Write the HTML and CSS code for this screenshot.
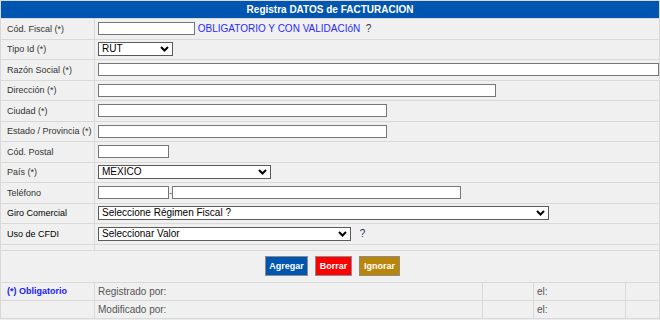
FILE: index.html
```html
<!DOCTYPE html>
<html lang="es">
<head>
    <meta charset="UTF-8">
    <title>Registra DATOS de FACTURACION</title>
    <link rel="stylesheet" href="styles.css">
</head>
<body>
    <table class="form">
        <colgroup>
            <col class="c-lbl">
            <col class="c-main">
            <col class="c-a">
            <col class="c-b">
            <col class="c-c">
        </colgroup>
        <tr>
            <td class="title" colspan="5">Registra DATOS de FACTURACION</td>
        </tr>
        <tr>
            <td class="lbl">Cód. Fiscal (*)</td>
            <td class="fld" colspan="4"><input type="text" class="txt w-fiscal"> <span class="req">OBLIGATORIO Y CON VALIDACIóN</span>&nbsp; <span class="help">?</span></td>
        </tr>
        <tr>
            <td class="lbl">Tipo Id (*)</td>
            <td class="fld" colspan="4">
                <span class="sel w-tipo"><select><option>RUT</option></select><svg viewBox="0 0 9 6"><path d="M1 1 L4.5 4.5 L8 1"/></svg></span>
            </td>
        </tr>
        <tr>
            <td class="lbl">Razón Social (*)</td>
            <td class="fld" colspan="4"><input type="text" class="txt w-razon"></td>
        </tr>
        <tr>
            <td class="lbl">Dirección (*)</td>
            <td class="fld" colspan="4"><input type="text" class="txt w-dir"></td>
        </tr>
        <tr>
            <td class="lbl">Ciudad (*)</td>
            <td class="fld" colspan="4"><input type="text" class="txt w-mid"></td>
        </tr>
        <tr>
            <td class="lbl">Estado / Provincia (*)</td>
            <td class="fld" colspan="4"><input type="text" class="txt w-mid"></td>
        </tr>
        <tr>
            <td class="lbl">Cód. Postal</td>
            <td class="fld" colspan="4"><input type="text" class="txt w-short"></td>
        </tr>
        <tr>
            <td class="lbl">País (*)</td>
            <td class="fld" colspan="4">
                <span class="sel w-pais"><select><option>MEXICO</option></select><svg viewBox="0 0 9 6"><path d="M1 1 L4.5 4.5 L8 1"/></svg></span>
            </td>
        </tr>
        <tr>
            <td class="lbl">Teléfono</td>
            <td class="fld" colspan="4"><input type="text" class="txt w-short"><span class="dash">-</span><input type="text" class="txt w-mid"></td>
        </tr>
        <tr>
            <td class="lbl dark">Giro Comercial</td>
            <td class="fld" colspan="4">
                <span class="sel w-giro"><select><option>Seleccione Régimen Fiscal ?</option></select><svg viewBox="0 0 9 6"><path d="M1 1 L4.5 4.5 L8 1"/></svg></span>
            </td>
        </tr>
        <tr>
            <td class="lbl dark">Uso de CFDI</td>
            <td class="fld" colspan="4">
                <span class="sel w-uso"><select><option>Seleccionar Valor</option></select><svg viewBox="0 0 9 6"><path d="M1 1 L4.5 4.5 L8 1"/></svg></span>
                <span class="help uso-help">?</span>
            </td>
        </tr>
        <tr class="spacer">
            <td></td>
            <td colspan="4"></td>
        </tr>
        <tr>
            <td class="actions" colspan="5">
                <div class="btns">
                    <button class="btn btn-add">Agregar</button>
                    <button class="btn btn-del">Borrar</button>
                    <button class="btn btn-ign">Ignorar</button>
                </div>
            </td>
        </tr>
        <tr class="info">
            <td class="lbl note">(*) Obligatorio</td>
            <td class="meta">Registrado por:</td>
            <td></td>
            <td class="meta">el:</td>
            <td></td>
        </tr>
        <tr class="info">
            <td></td>
            <td class="meta">Modificado por:</td>
            <td></td>
            <td class="meta">el:</td>
            <td></td>
        </tr>
    </table>
</body>
</html>
```

FILE: styles.css
```css
body {
    margin: 0;
    font-family: "Liberation Sans", Arial, sans-serif;
    background-color: #e8edf2;
}
.form {
    width: 660px;
    table-layout: fixed;
    border-collapse: separate;
    border-spacing: 1px;
    background-color: #d9d9d9;
}
.c-lbl { width: 93px; }
.c-main { width: 387px; }
.c-a { width: 50px; }
.c-b { width: 91px; }
.c-c { width: 33px; }
.form td {
    background-color: #f0f0f0;
    padding: 0;
    height: 19.5px;
    white-space: nowrap;
}
.form td.title {
    height: 17px;
    background-color: #0055b0;
    color: #fff;
    font-weight: bold;
    font-size: 10px;
    text-align: center;
}
.lbl {
    padding-left: 6px !important;
    font-size: 9px;
    color: #333;
}
.lbl.dark {
    color: #000;
}
.fld {
    padding-left: 3px !important;
    font-size: 10px;
}
.txt {
    box-sizing: border-box;
    height: 13px;
    margin: 0;
    padding: 0 2px;
    border: 1px solid #767676;
    background: #fff;
    font: 10px "Liberation Sans", Arial, sans-serif;
    vertical-align: middle;
}
.w-fiscal { width: 97px; }
.w-razon { width: 561px; }
.w-dir { width: 398px; }
.w-mid { width: 289px; }
.w-short { width: 71px; }
.dash {
    display: inline-block;
    width: 3px;
    vertical-align: middle;
    font-size: 9px;
    color: #555;
}
.req {
    color: #2b2bff;
    vertical-align: middle;
}
.help {
    color: #333;
    vertical-align: middle;
}
.uso-help {
    margin-left: 6px;
    color: #1f2a66;
}
.sel {
    position: relative;
    display: inline-block;
    vertical-align: middle;
}
.sel select {
    display: block;
    box-sizing: border-box;
    width: 100%;
    height: 14px;
    margin: 0;
    padding: 0 0 0 3px;
    border: 1px solid #5a5a5a;
    border-radius: 0;
    background: #fff;
    color: #000;
    font: 10px "Liberation Sans", Arial, sans-serif;
    line-height: 12px;
    appearance: none;
    -webkit-appearance: none;
}
.sel svg {
    position: absolute;
    right: 4px;
    top: 4px;
    width: 9px;
    height: 6px;
    fill: none;
    stroke: #000;
    stroke-width: 2;
    pointer-events: none;
}
.w-tipo { width: 75px; }
.w-pais { width: 173px; }
.w-giro { width: 451px; }
.w-uso { width: 253px; }
.form tr.spacer td {
    height: 5.5px;
}
.form td.actions {
    height: 30.5px;
}
.btns {
    display: flex;
    justify-content: center;
    gap: 7px;
    padding-left: 5px;
}
.btn {
    height: 20px;
    margin: 0;
    padding: 0;
    border: 1px solid #8c8c8c;
    color: #fff;
    font: bold 9px "Liberation Sans", Arial, sans-serif;
    cursor: pointer;
}
.btn-add {
    width: 43px;
    background-color: #0055b0;
}
.btn-del {
    width: 37px;
    background-color: #ff0000;
}
.btn-ign {
    width: 41px;
    background-color: #b8860b;
}
.form tr.info td {
    height: 17px;
}
.note {
    color: #2020ff !important;
    font-weight: bold;
}
.meta {
    padding-left: 3px !important;
    font-size: 10px;
    color: #555;
}
```
